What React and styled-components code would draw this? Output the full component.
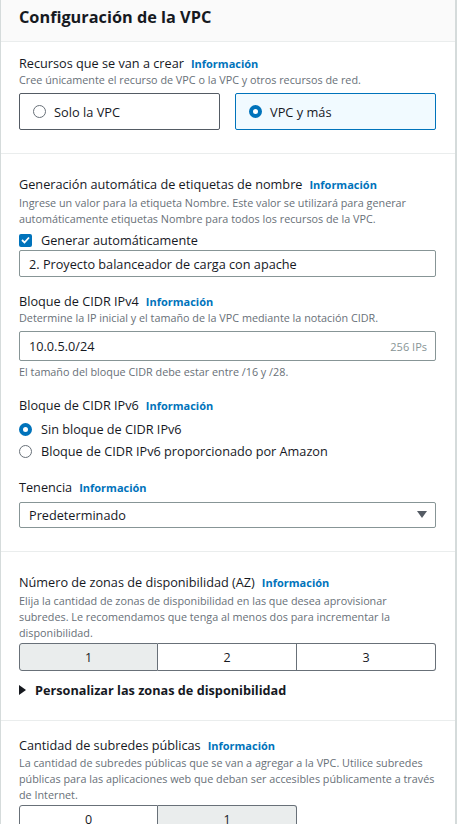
import React, { useState } from 'react';
import styled, { createGlobalStyle } from 'styled-components';

const GlobalStyle = createGlobalStyle`
  body {
    margin: 0;
    background: #ffffff;
    font-family: "Open Sans", "Noto Sans", sans-serif;
    color: #16191f;
  }
`;

const Panel = styled.div`
  box-sizing: border-box;
  width: 457px;
  height: 824px;
  overflow: hidden;
  border-left: 1px solid #d5dbdb;
  border-right: 2px solid #d5dbdb;
  background: #ffffff;
`;

const Header = styled.div`
  box-sizing: border-box;
  height: 42px;
  padding: 7px 18px 0 18px;
  background: #fafafa;
  border-bottom: 1px solid #eaeded;
`;

const Title = styled.h2`
  margin: 0;
  font-size: 16.3px;
  line-height: 20px;
  font-weight: 700;
  color: #16191f;
`;

const Section = styled.div`
  padding: ${(p) => p.$top}px 19px ${(p) => p.$bottom}px 18px;
  border-bottom: ${(p) => (p.$last ? 'none' : '1px solid #eaeded')};
`;

const Label = styled.div`
  height: 18px;
  margin-top: ${(p) => p.$mt || 0}px;
  font-size: 12.7px;
  line-height: 18px;
  color: #16191f;
  white-space: nowrap;
`;

const Info = styled.span`
  margin-left: 7px;
  font-size: 11px;
  line-height: 18px;
  font-weight: 700;
  color: #0073bb;
`;

const Desc = styled.div`
  margin-top: ${(p) => p.$mt || 0}px;
  font-size: 10.8px;
  line-height: 16px;
  color: #687078;
`;

const Tiles = styled.div`
  display: grid;
  grid-template-columns: 1fr 1fr;
  gap: 15px;
  margin-top: 5px;
`;

const Tile = styled.div`
  box-sizing: border-box;
  height: 37px;
  display: flex;
  align-items: center;
  gap: 8px;
  padding-left: 13px;
  border: 1px solid ${(p) => (p.$active ? '#0073bb' : '#545b64')};
  background: ${(p) => (p.$active ? '#f1faff' : '#ffffff')};
  border-radius: 2px;
  font-size: 12.8px;
  cursor: pointer;
`;

const Radio = styled.span`
  box-sizing: border-box;
  width: 13px;
  height: 13px;
  flex: none;
  border-radius: 50%;
  border: ${(p) => (p.$on ? '4px solid #0073bb' : '1px solid #687078')};
  background: #ffffff;
`;

const Row = styled.div`
  display: flex;
  align-items: center;
  gap: 9px;
  height: ${(p) => p.$h || 22}px;
  margin-top: ${(p) => p.$mt || 0}px;
  font-size: 12.7px;
  color: #16191f;
`;

const Check = styled.span`
  box-sizing: border-box;
  width: 13px;
  height: 13px;
  flex: none;
  border-radius: 2px;
  background: #0073bb;
  display: flex;
  align-items: center;
  justify-content: center;
`;

const Input = styled.div`
  box-sizing: border-box;
  height: ${(p) => p.$h}px;
  margin-top: ${(p) => p.$mt || 0}px;
  display: flex;
  align-items: center;
  justify-content: space-between;
  padding: 0 8px 0 9px;
  border: 1px solid #879596;
  border-radius: 2px;
  font-size: 12.7px;
  color: #16191f;
`;

const Suffix = styled.span`
  font-size: 11px;
  color: #879596;
`;

const Segments = styled.div`
  display: grid;
  grid-template-columns: repeat(3, 139px);
  margin-top: 2px;
  width: 418px;
`;

const Segment = styled.div`
  box-sizing: border-box;
  height: 28px;
  display: flex;
  align-items: center;
  justify-content: center;
  font-size: 12.5px;
  color: #16191f;
  background: ${(p) => (p.$on ? '#eaeded' : '#ffffff')};
  border: 1px solid #687078;
  border-left-width: ${(p) => (p.$first ? 1 : 0)}px;
  border-radius: ${(p) => (p.$first ? '3px 0 0 3px' : p.$lastSeg ? '0 3px 3px 0' : '0')};
`;

const Expander = styled.div`
  display: flex;
  align-items: center;
  gap: 8px;
  height: 18px;
  margin-top: 10px;
  font-size: 12.7px;
  font-weight: 700;
  color: #16191f;
`;

function Caret({ dir }) {
  return dir === 'down' ? (
    <svg width="10" height="8" viewBox="0 0 10 8">
      <path d="M0 0 H10 L5 7 Z" fill="#545b64" />
    </svg>
  ) : (
    <svg width="8" height="10" viewBox="0 0 8 10">
      <path d="M0 0 V10 L7 5 Z" fill="#16191f" />
    </svg>
  );
}

function SegmentGroup({ options, value, onPick }) {
  return (
    <Segments>
      {options.map((o, i) => (
        <Segment
          key={o}
          $on={o === value}
          $first={i === 0}
          $lastSeg={i === options.length - 1}
          onClick={() => onPick(o)}
        >
          {o}
        </Segment>
      ))}
    </Segments>
  );
}

export default function App() {
  const [mode, setMode] = useState('more');
  const [azs, setAzs] = useState('1');
  const [pub, setPub] = useState('1');

  return (
    <>
      <GlobalStyle />
      <Panel>
        <Header>
          <Title>Configuración de la VPC</Title>
        </Header>

        <Section $top={12} $bottom={23}>
          <Label>
            Recursos que se van a crear<Info>Información</Info>
          </Label>
          <Desc>Cree únicamente el recurso de VPC o la VPC y otros recursos de red.</Desc>
          <Tiles>
            <Tile $active={mode === 'vpc'} onClick={() => setMode('vpc')}>
              <Radio $on={mode === 'vpc'} />
              Solo la VPC
            </Tile>
            <Tile $active={mode === 'more'} onClick={() => setMode('more')}>
              <Radio $on={mode === 'more'} />
              VPC y más
            </Tile>
          </Tiles>
        </Section>

        <Section $top={21} $bottom={23}>
          <Label>
            Generación automática de etiquetas de nombre<Info>Información</Info>
          </Label>
          <Desc $mt={2}>
            Ingrese un valor para la etiqueta Nombre. Este valor se utilizará para generar
            automáticamente etiquetas Nombre para todos los recursos de la VPC.
          </Desc>
          <Row $h={18} $mt={4}>
            <Check>
              <svg width="9" height="8" viewBox="0 0 9 8">
                <path d="M1 4 L3.5 6.5 L8 1.5" stroke="#fff" strokeWidth="1.8" fill="none" />
              </svg>
            </Check>
            Generar automáticamente
          </Row>
          <Input $h={27} $mt={1}>2. Proyecto balanceador de carga con apache</Input>

          <Label $mt={15}>
            Bloque de CIDR IPv4<Info>Información</Info>
          </Label>
          <Desc>Determine la IP inicial y el tamaño de la VPC mediante la notación CIDR.</Desc>
          <Input $h={30} $mt={5}>
            10.0.5.0/24
            <Suffix>256 IPs</Suffix>
          </Input>
          <Desc $mt={3}>El tamaño del bloque CIDR debe estar entre /16 y /28.</Desc>

          <Label $mt={16}>
            Bloque de CIDR IPv6<Info>Información</Info>
          </Label>
          <Row $mt={4}>
            <Radio $on />
            Sin bloque de CIDR IPv6
          </Row>
          <Row>
            <Radio />
            Bloque de CIDR IPv6 proporcionado por Amazon
          </Row>

          <Label $mt={16}>
            Tenencia<Info>Información</Info>
          </Label>
          <Input $h={26} $mt={6}>
            Predeterminado
            <Caret dir="down" />
          </Input>
        </Section>

        <Section $top={21} $bottom={21}>
          <Label>
            Número de zonas de disponibilidad (AZ)<Info>Información</Info>
          </Label>
          <Desc $mt={2}>
            Elija la cantidad de zonas de disponibilidad en las que desea aprovisionar
            subredes. Le recomendamos que tenga al menos dos para incrementar la
            disponibilidad.
          </Desc>
          <SegmentGroup options={['1', '2', '3']} value={azs} onPick={setAzs} />
          <Expander>
            <Caret dir="right" />
            Personalizar las zonas de disponibilidad
          </Expander>
        </Section>

        <Section $top={15} $bottom={0} $last>
          <Label>
            Cantidad de subredes públicas<Info>Información</Info>
          </Label>
          <Desc $mt={1}>
            La cantidad de subredes públicas que se van a agregar a la VPC. Utilice subredes
            públicas para las aplicaciones web que deban ser accesibles públicamente a través
            de Internet.
          </Desc>
          <SegmentGroup options={['0', '1']} value={pub} onPick={setPub} />
        </Section>
      </Panel>
    </>
  );
}
